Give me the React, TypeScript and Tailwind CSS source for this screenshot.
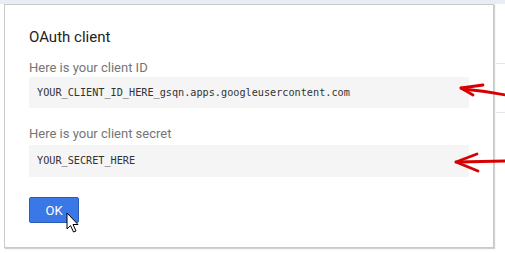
import React from "react";

export default function App() {
  return (
    <div className="relative w-[505px] h-[253px] bg-white overflow-hidden" style={{ fontFamily: "Roboto, 'Liberation Sans', sans-serif" }}>
      <div className="h-[4px] w-full bg-[#e8edf4]" />
      {/* faint background page lines on the right */}
      <div className="absolute left-[496px] top-[63px] w-[9px] h-px bg-[#e6e6e6]" />
      <div className="absolute left-[496px] top-[112px] w-[9px] h-px bg-[#e6e6e6]" />
      <div className="ml-[4px] w-[490px] h-[244px] border border-[#c9c9c9] bg-white shadow-[1px_1px_1px_rgba(0,0,0,0.18)] px-[24px] pt-[22px] flex flex-col">
        <div className="text-[15px] leading-[20px] text-[#222]">OAuth client</div>
        <div className="mt-[13px] text-[13px] leading-[16px] text-[#757575]">Here is your client ID</div>
        <div className="mt-[1px] h-[31px] bg-[#f5f5f5] flex items-center pl-[8px] text-[10.2px] text-[#333]" style={{ fontFamily: "'DejaVu Sans Mono', monospace" }}>
          YOUR_CLIENT_ID_HERE_gsqn.apps.googleusercontent.com
        </div>
        <div className="mt-[18px] text-[13px] leading-[16px] text-[#757575]">Here is your client secret</div>
        <div className="mt-[3px] h-[32px] bg-[#f5f5f5] flex items-center pl-[8px] text-[10.2px] text-[#333]" style={{ fontFamily: "'DejaVu Sans Mono', monospace" }}>
          YOUR_SECRET_HERE
        </div>
        <div className="mt-[20px]">
          <button className="w-[50px] h-[26px] rounded-[2px] bg-[#3b78e7] border border-[#2c5db5] text-white text-[13px] leading-none flex items-center justify-center">
            OK
          </button>
        </div>
      </div>
      {/* red annotation arrows */}
      <svg className="absolute left-0 top-0 pointer-events-none" width="505" height="253" viewBox="0 0 505 253">
        <g stroke="#d60000" strokeWidth="2.8" fill="none" strokeLinecap="round" strokeLinejoin="round">
          <path d="M461 88 L483 85" />
          <path d="M461 88 L473 95" />
          <path d="M463 89 Q485 91 506 95" />
          <path d="M456 162 L477 154" />
          <path d="M456 162 L478 171" />
          <path d="M458 162 L506 161" />
        </g>
        {/* mouse cursor */}
        <path d="M67 213 L67 229 L70.5 225.5 L73.5 232 L76 231 L73 224.5 L78 224.5 Z" fill="#fff" stroke="#000" strokeWidth="1" strokeLinejoin="round" />
      </svg>
    </div>
  );
}
